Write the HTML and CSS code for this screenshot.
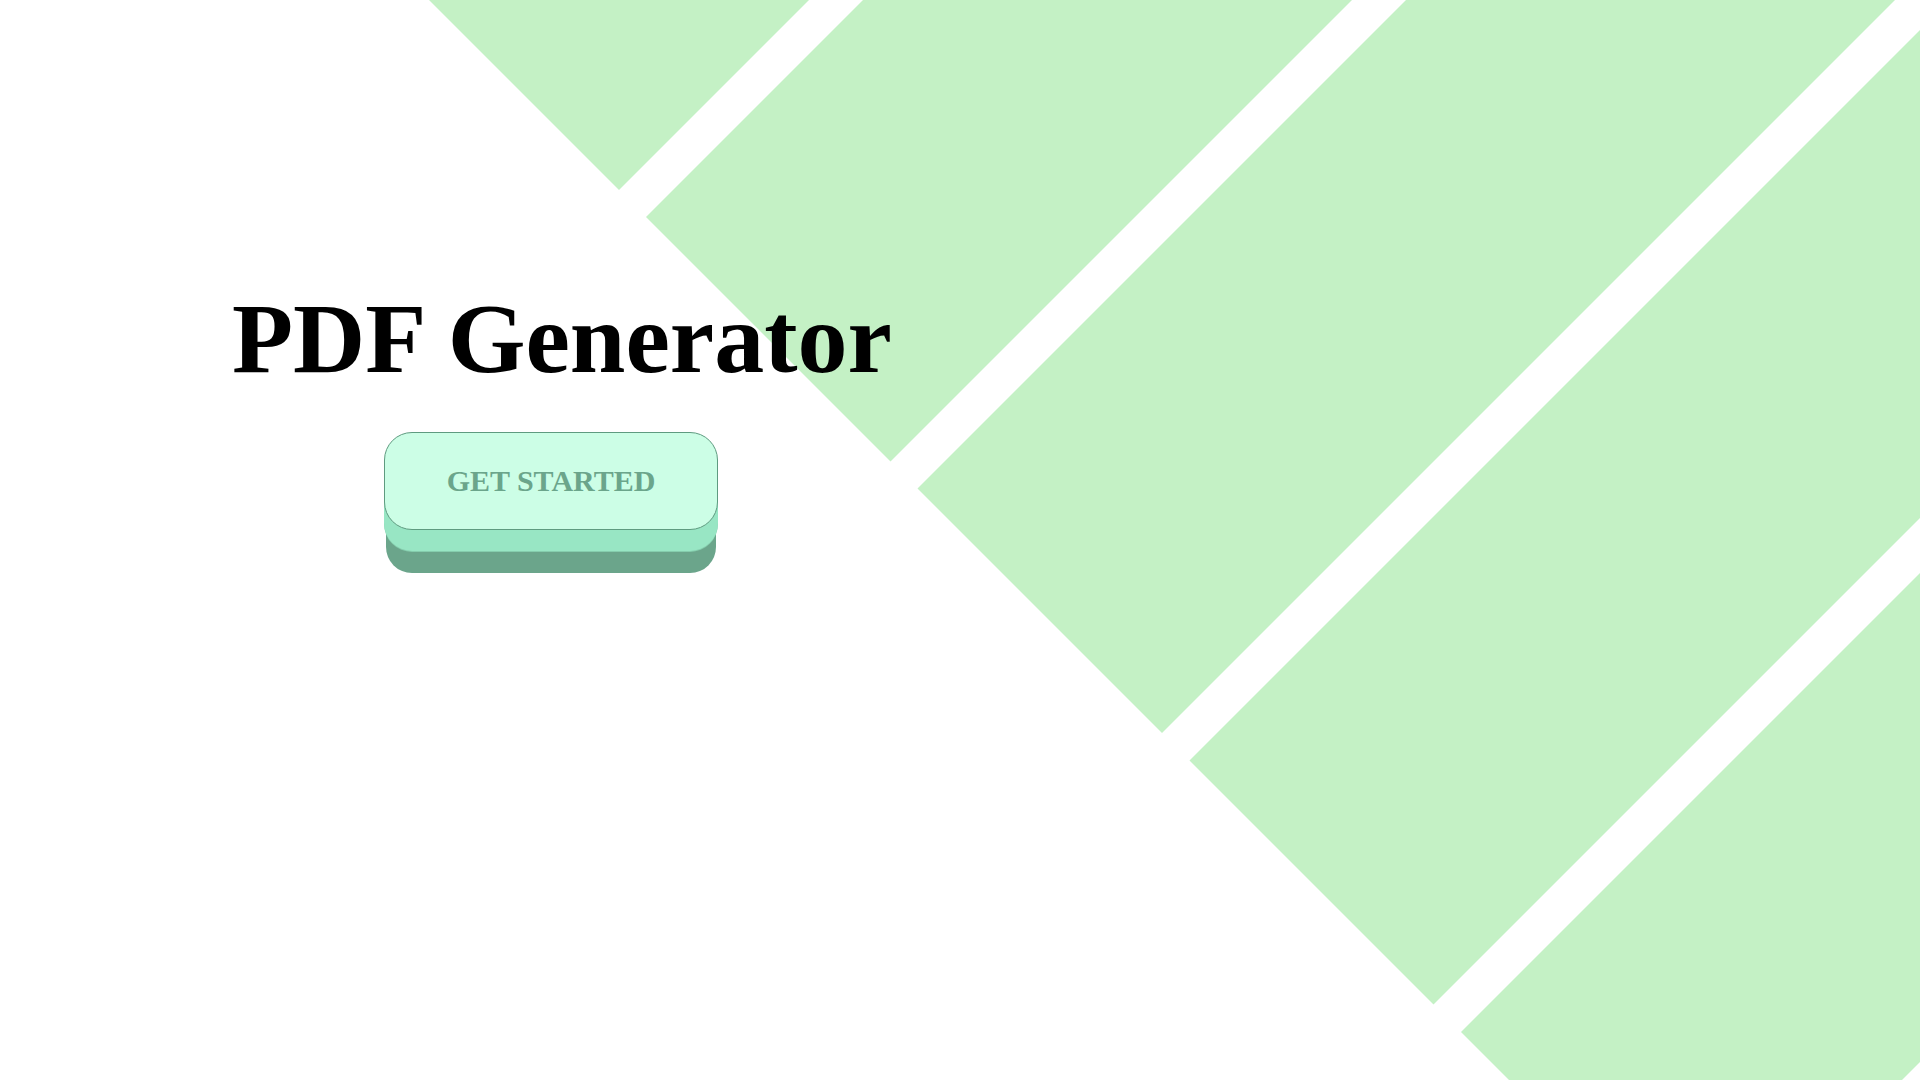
FILE: index.html
```html
<!DOCTYPE html>
<html lang="en">
<head>
<meta charset="utf-8">
<title>PDF Generator</title>
<link rel="stylesheet" href="styles.css">
</head>
<body>
<div class="page">
  <svg class="bg" width="1920" height="1080" viewBox="0 0 1920 1080" aria-hidden="true">
    <g class="stripes">
      <polygon points="374.5,-54.5 619,190 3619,-2810 3374.5,-3054.5"/>
      <polygon points="646,217 890.5,461.5 3890.5,-2538.5 3646,-2783"/>
      <polygon points="917.5,488.5 1162,733 4162,-2267 3917.5,-2511.5"/>
      <polygon points="1189.5,760.5 1433.5,1004.5 4433.5,-1995.5 4189.5,-2239.5"/>
      <polygon points="1461,1032 1705.5,1276.5 4705.5,-1723.5 4461,-1968"/>
    </g>
  </svg>
  <main class="hero">
    <h1 class="title">PDF Generator</h1>
    <button class="start-btn" type="button">GET STARTED</button>
  </main>
</div>
</body>
</html>
```

FILE: styles.css
```css
html, body {
  margin: 0;
  padding: 0;
  background: #ffffff;
}

.page {
  position: relative;
  width: 100%;
  height: 100vh;
  overflow: hidden;
  background: #ffffff;
}

.bg {
  position: absolute;
  top: 0;
  left: 0;
  z-index: 0;
}

.stripes polygon {
  fill: #c4f1c5;
}

.hero {
  position: relative;
  z-index: 1;
  display: flex;
  flex-direction: column;
  align-items: flex-start;
  padding: 281px 0 0 232px;
}

.title {
  margin: 0;
  font-family: "Liberation Serif", "Times New Roman", serif;
  font-weight: bold;
  font-size: 100px;
  line-height: 1.15;
  color: #000000;
}

.start-btn {
  margin-top: 36px;
  margin-left: 152px;
  width: 334px;
  height: 98px;
  box-sizing: border-box;
  padding: 0;
  border: 1px solid #5f9b80;
  border-radius: 28px;
  background: #ccfee6;
  color: #6ba58b;
  font-family: "Liberation Serif", "Times New Roman", serif;
  font-weight: bold;
  font-size: 30px;
  line-height: 1;
  cursor: pointer;
  box-shadow:
    0 21px 0 0 #98e6c4,
    0 22px 0 0 #85cdad,
    0 45px 0 -2px #6ba58b;
}
```
